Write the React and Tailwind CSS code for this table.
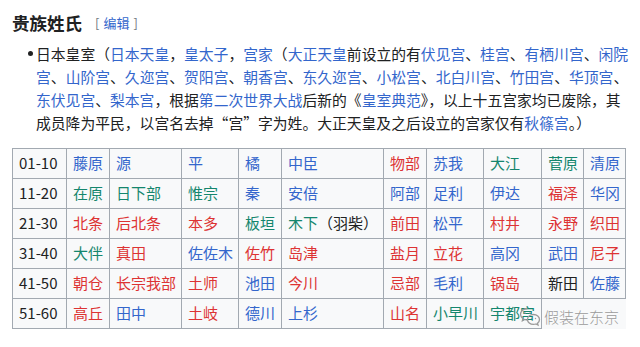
import React from 'react';

const B = 'text-[#3366cc]';
const G = 'text-[#14866d]';
const R = 'text-[#d33]';
const K = 'text-[#202122]';

const rows = [
  ['01-10', [['藤原', B], ['源', B], ['平', B], ['橘', B], ['中臣', B], ['物部', R], ['苏我', B], ['大江', G], ['菅原', G], ['清原', B]]],
  ['11-20', [['在原', G], ['日下部', G], ['惟宗', G], ['秦', B], ['安倍', B], ['阿部', B], ['足利', B], ['伊达', B], ['福泽', R], ['华冈', B]]],
  ['21-30', [['北条', R], ['后北条', R], ['本多', R], ['板垣', G], ['木下', G, '（羽柴）'], ['前田', R], ['松平', B], ['村井', R], ['永野', R], ['织田', R]]],
  ['31-40', [['大伴', G], ['真田', R], ['佐佐木', B], ['佐竹', R], ['岛津', R], ['盐月', R], ['立花', R], ['高冈', B], ['武田', B], ['尼子', R]]],
  ['41-50', [['朝仓', R], ['长宗我部', R], ['土师', R], ['池田', B], ['今川', R], ['忌部', R], ['毛利', B], ['锅岛', R], ['新田', K], ['佐藤', B]]],
  ['51-60', [['高丘', R], ['田中', B], ['土岐', R], ['德川', B], ['上杉', B], ['山名', R], ['小早川', G], ['宇都宫', G]]],
];

const widths = [54, 43, 72, 57, 43, 102, 43, 57, 58, 42, 42];

const L = ({ children }) => <span className="text-[#3366cc]">{children}</span>;

const App = () => {
  return (
    <div
      className="relative w-[640px] h-[347px] overflow-hidden bg-white text-[#202122]"
      style={{ fontFamily: '"Noto Sans CJK SC", "Noto Sans", sans-serif' }}
    >
      <div className="pl-[12px] pt-[12px] flex items-center h-[34px]">
        <h2 className="text-[17.5px] font-bold leading-[22px]">贵族姓氏</h2>
        <span className="ml-[13px] text-[13px] leading-[22px] text-[#72777d]">
          [<span className="mx-[4px] text-[#3366cc]">编辑</span>]
        </span>
      </div>

      <div className="mt-[7.5px] pl-[28px] flex">
        <div className="w-[4.5px] h-[4.5px] rounded-full bg-[#202122] mt-[9.5px] mr-[3.5px] shrink-0" />
        <p className="w-[594px] text-[14.8px] leading-[23px]">
          日本皇室（<L>日本天皇</L>，<L>皇太子</L>，<L>宫家</L>（<L>大正天皇</L>前设立的有<L>伏见宫</L>、<L>桂宫</L>、<L>有栖川宫</L>、<L>闲院宫</L>、<L>山阶宫</L>、<L>久迩宫</L>、<L>贺阳宫</L>、<L>朝香宫</L>、<L>东久迩宫</L>、<L>小松宫</L>、<L>北白川宫</L>、<L>竹田宫</L>、<L>华顶宫</L>、<L>东伏见宫</L>、<L>梨本宫</L>，根据<L>第二次世界大战</L>后新的《<L>皇室典范</L>》，以上十五宫家均已废除，其成员降为平民，以宫名去掉<span className="[font-feature-settings:'fwid']">“宫”</span>字为姓。大正天皇及之后设立的宫家仅有<L>秋篠宫</L>。）
        </p>
      </div>

      <table className="ml-[12px] mt-[14.5px] w-[613px] table-fixed border-collapse bg-[#f8f9fa] text-[15px]">
        <colgroup>
          {widths.map((w, i) => (
            <col key={i} style={{ width: w }} />
          ))}
        </colgroup>
        <tbody>
          {rows.map(([label, names]) => (
            <tr key={label}>
              <td className="h-[30px] px-[6px] py-0 border border-[#a2a9b1] text-[#202122] whitespace-nowrap">{label}</td>
              {names.map(([n, c, extra]) => (
                <td key={n} className={`h-[30px] px-[6px] py-0 border border-[#a2a9b1] whitespace-nowrap ${c}`}>
                  {n}
                  {extra && <span className="text-[#202122]">{extra}</span>}
                </td>
              ))}
            </tr>
          ))}
        </tbody>
      </table>

      <div className="absolute left-[518px] top-[305px] flex items-center gap-[2px] text-[#9a9a9a]">
        <svg width="24" height="24" viewBox="0 0 24 24" fill="none" stroke="#9a9a9a" strokeWidth="1.3">
          <path d="M9.5 3.5c-4 0-7 2.6-7 5.8 0 1.8 1 3.4 2.5 4.4l-.6 2 2.4-1.2c.8.3 1.8.5 2.7.5" />
          <circle cx="7" cy="8" r="0.8" fill="#9a9a9a" stroke="none" />
          <circle cx="12" cy="8" r="0.8" fill="#9a9a9a" stroke="none" />
          <path d="M15.5 9.5c3.4 0 6 2.2 6 5 0 1.5-.8 2.8-2 3.7l.5 1.8-2.1-1c-.7.2-1.5.4-2.4.4-3.4 0-6-2.2-6-5s2.6-4.9 6-4.9z" />
          <circle cx="13.5" cy="13.5" r="0.7" fill="#9a9a9a" stroke="none" />
          <circle cx="17.5" cy="13.5" r="0.7" fill="#9a9a9a" stroke="none" />
        </svg>
        <span className="text-[15px] leading-[20px] font-light" style={{ textShadow: '0 0 2px #fff' }}>假装在东京</span>
      </div>
    </div>
  );
};

export default App;
